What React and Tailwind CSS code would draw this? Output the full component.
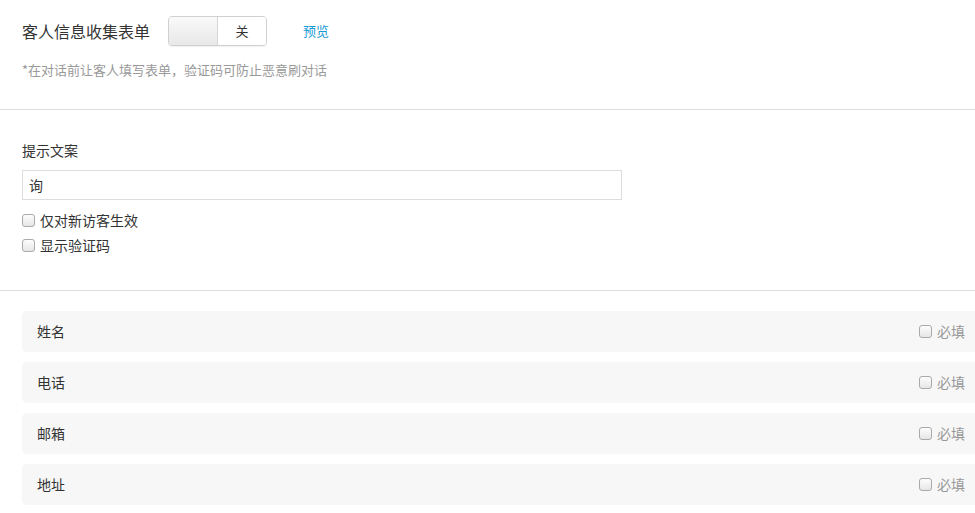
const FONT = { fontFamily: '"Noto Sans CJK SC", "Noto Sans", sans-serif' };

function Box({ className = "" }) {
  return (
    <span
      className={
        "inline-block w-[13px] h-[13px] rounded-[3px] border border-[#aaa] bg-gradient-to-b from-[#fdfdfd] to-[#e6e6e6] " +
        className
      }
    />
  );
}

const fields = ["姓名", "电话", "邮箱", "地址"];

export default function App() {
  return (
    <div className="w-full h-[513px] overflow-hidden bg-white text-[#333]" style={FONT}>
      <section className="px-[22px] pt-[16px] pb-[29px] border-b border-[#ddd]">
        <div className="flex items-center h-[30px]">
          <span className="text-[16px] w-[146px]">客人信息收集表单</span>
          <div className="flex h-[30px] w-[99px] rounded-[4px] border border-[#d0d0d0] overflow-hidden shadow-[0_1px_1px_rgba(0,0,0,0.06)]">
            <div className="w-[49px] bg-gradient-to-b from-[#fafafa] to-[#e8e8e8] border-r border-[#d6d6d6]" />
            <div className="flex-1 flex items-center justify-center text-[13px] bg-white">关</div>
          </div>
          <a className="ml-[36px] text-[13px] text-[#1a9ad6]">预览</a>
        </div>
        <p className="mt-[14px] text-[13px] text-[#999] leading-[20px]">*在对话前让客人填写表单，验证码可防止恶意刷对话</p>
      </section>

      <section className="px-[22px] pt-[30px] pb-[35px] border-b border-[#ddd]">
        <div className="text-[14px] leading-[20px]">提示文案</div>
        <div className="mt-[10px] w-[600px] h-[30px] border border-[#ddd] flex items-center px-[6px] text-[14px]">询</div>
        <label className="mt-[10px] flex items-center gap-[5px] text-[14px] leading-[20px]">
          <Box />
          仅对新访客生效
        </label>
        <label className="mt-[5px] flex items-center gap-[5px] text-[14px] leading-[20px]">
          <Box />
          显示验证码
        </label>
      </section>

      <section className="pl-[22px] pt-[20px] flex flex-col gap-[10px]">
        {fields.map((f) => (
          <div
            key={f}
            className="h-[41px] mr-[-20px] rounded-[5px] bg-[#f7f7f7] flex items-center justify-between pl-[15px] pr-[30px] text-[14px]"
          >
            <span>{f}</span>
            <span className="flex items-center gap-[5px] text-[#999]">
              <Box />
              必填
            </span>
          </div>
        ))}
      </section>
    </div>
  );
}
